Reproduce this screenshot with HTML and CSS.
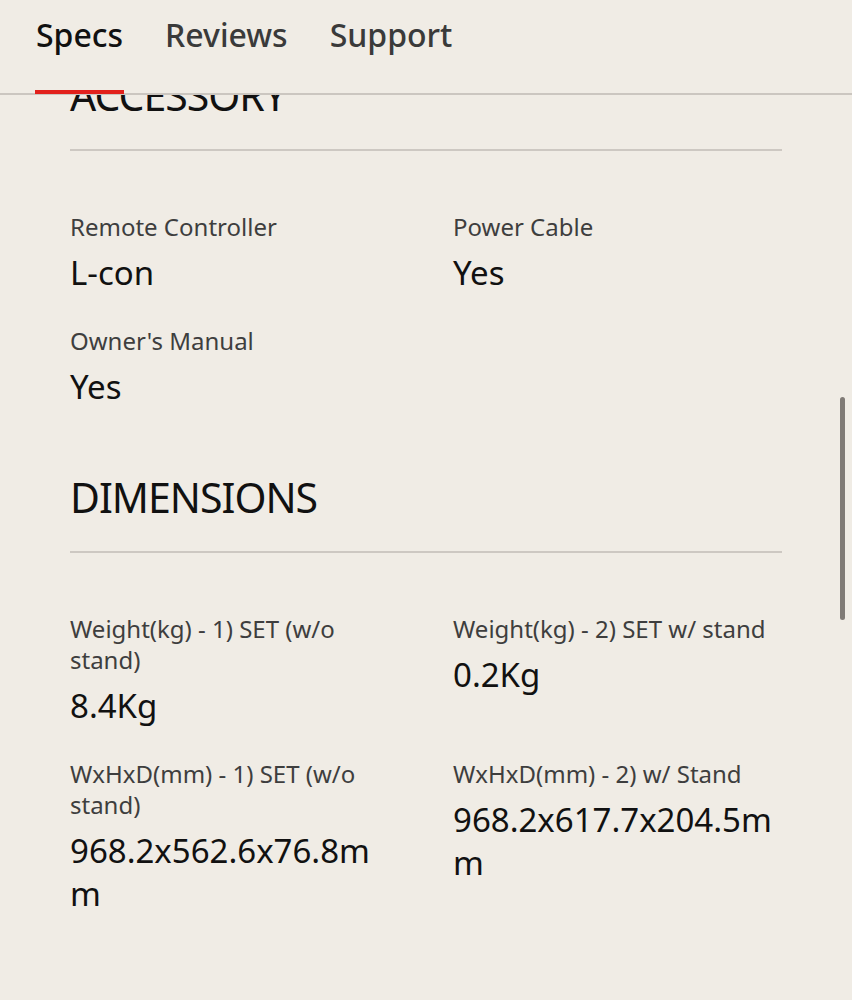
FILE: index.html
```html
<!DOCTYPE html>
<html lang="en">
<head>
<meta charset="utf-8">
<title>Specs</title>
<link rel="stylesheet" href="styles.css">
</head>
<body>
<header class="tabs">
  <nav class="tab-list">
    <a class="tab tab-active">Specs</a>
    <a class="tab">Reviews</a>
    <a class="tab">Support</a>
  </nav>
</header>

<main class="content">
  <section class="spec-section">
    <h2 class="spec-title">ACCESSORY</h2>
    <div class="spec-grid">
      <div class="spec-item">
        <div class="spec-label">Remote Controller</div>
        <div class="spec-value">L-con</div>
      </div>
      <div class="spec-item">
        <div class="spec-label">Power Cable</div>
        <div class="spec-value">Yes</div>
      </div>
      <div class="spec-item">
        <div class="spec-label">Owner's Manual</div>
        <div class="spec-value">Yes</div>
      </div>
    </div>
  </section>

  <section class="spec-section">
    <h2 class="spec-title">DIMENSIONS</h2>
    <div class="spec-grid">
      <div class="spec-item">
        <div class="spec-label">Weight(kg) - 1) SET (w/o stand)</div>
        <div class="spec-value">8.4Kg</div>
      </div>
      <div class="spec-item">
        <div class="spec-label">Weight(kg) - 2) SET w/ stand</div>
        <div class="spec-value">0.2Kg</div>
      </div>
      <div class="spec-item">
        <div class="spec-label">WxHxD(mm) - 1) SET (w/o stand)</div>
        <div class="spec-value">968.2x562.6x76.8mm</div>
      </div>
      <div class="spec-item">
        <div class="spec-label">WxHxD(mm) - 2) w/ Stand</div>
        <div class="spec-value">968.2x617.7x204.5mm</div>
      </div>
    </div>
  </section>
</main>

<div class="scroll-thumb"></div>
</body>
</html>
```

FILE: styles.css
```css
html, body {
  margin: 0;
  padding: 0;
  background: #f0ece5;
}

body {
  font-family: "Noto Sans", "Open Sans", sans-serif;
  color: #111;
  height: 1000px;
  overflow: hidden;
}

.tabs {
  position: fixed;
  top: 0;
  left: 0;
  right: 0;
  height: 93px;
  background: #f0ece5;
  border-bottom: 2px solid #cbc6c0;
  z-index: 5;
}

.tab-list {
  display: flex;
  gap: 42px;
  padding: 15px 0 0 36px;
}

.tab {
  position: relative;
  display: block;
  font-size: 32px;
  line-height: 40px;
  font-weight: 500;
  color: #3a3a3a;
  text-decoration: none;
}

.tab-active {
  color: #111;
}

.tab-active::after {
  content: "";
  position: absolute;
  left: -1px;
  right: -1px;
  top: 75px;
  height: 4px;
  background: #e2211c;
}

.content {
  padding: 68px 70px 0;
}

.spec-section + .spec-section {
  margin-top: 62px;
}

.spec-title {
  margin: 0;
  font-size: 41px;
  line-height: 54px;
  font-weight: 400;
  letter-spacing: -1px;
  color: #111;
  padding-bottom: 27px;
  border-bottom: 2px solid #cdc8c2;
}

.spec-grid {
  display: grid;
  grid-template-columns: 1fr 1fr;
  column-gap: 54px;
  row-gap: 31px;
  padding-top: 60px;
}

.spec-item {
  padding-right: 10px;
}

.spec-label {
  font-size: 24px;
  line-height: 31px;
  color: #3e3e3e;
}

.spec-value {
  margin-top: 9px;
  font-size: 33px;
  line-height: 43px;
  color: #111;
  word-break: break-all;
}

.scroll-thumb {
  position: fixed;
  right: 7px;
  top: 397px;
  width: 5px;
  height: 223px;
  border-radius: 3px;
  background: #807b76;
}
```
